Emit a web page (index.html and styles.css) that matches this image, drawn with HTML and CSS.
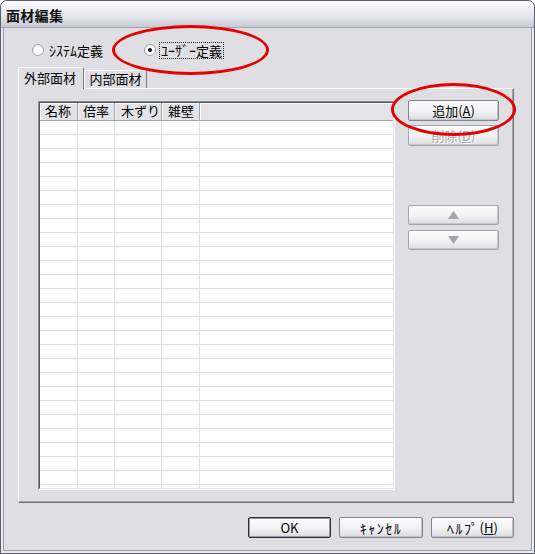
FILE: index.html
```html
<!DOCTYPE html>
<html lang="ja">
<head>
<meta charset="utf-8">
<title>面材編集</title>
<link rel="stylesheet" href="styles.css">
</head>
<body>
<div class="window">
  <div class="titlebar"><span class="title">面材編集</span></div>
  <div class="client">
    <div class="radios">
      <label class="radio r1"><span class="dot"></span><span class="rtext"><span class="hk">ｼｽﾃﾑ</span>定義</span></label>
      <label class="radio r2"><span class="dot checked"></span><span class="rtext focus"><span class="hk">ﾕｰｻﾞｰ</span>定義</span></label>
    </div>
    <div class="tabs">
      <div class="tab active">外部面材</div>
      <div class="tab">内部面材</div>
    </div>
    <div class="panel">
      <div class="list">
        <div class="list-inner">
          <div class="lv-head">
            <div class="hc c1">名称</div>
            <div class="hc c2">倍率</div>
            <div class="hc c3">木ずり</div>
            <div class="hc c4">雑壁</div>
            <div class="hc c5"></div>
          </div>
          <div class="lv-body">
            <div class="col c1"></div>
            <div class="col c2"></div>
            <div class="col c3"></div>
            <div class="col c4"></div>
            <div class="col c5"></div>
          </div>
        </div>
      </div>
      <div class="side">
        <button class="btn side-btn">追加(<u>A</u>)</button>
        <button class="btn side-btn disabled second">削除(<u>D</u>)</button>
        <button class="btn arrow disabled up"><svg width="11" height="8" viewBox="0 0 11 8"><polygon points="5.5,0 11,8 0,8" fill="#a4a4ac"/></svg></button>
        <button class="btn arrow disabled down"><svg width="11" height="8" viewBox="0 0 11 8"><polygon points="0,0 11,0 5.5,8" fill="#a4a4ac"/></svg></button>
      </div>
    </div>
    <div class="footer">
      <button class="btn foot default">OK</button>
      <button class="btn foot wide"><span class="hk bk">ｷｬﾝｾﾙ</span></button>
      <button class="btn foot"><span class="hk bk">ﾍﾙﾌﾟ</span>(<u>H</u>)</button>
    </div>
  </div>
  <div class="mark mark1"></div>
  <div class="mark mark2"></div>
</div>
</body>
</html>
```

FILE: styles.css
```css
* { box-sizing: border-box; }

html, body {
  margin: 0;
  padding: 0;
  background: #ffffff;
}

body {
  font-family: "Noto Sans CJK JP", sans-serif;
  font-size: 13px;
  color: #000;
}

.window {
  position: relative;
  width: 535px;
  height: 554px;
  border: 1px solid #5c5c6c;
  border-radius: 7px 7px 0 0;
  background: #dfdfe3;
  box-shadow: inset 0 0 0 2px #ececf0, inset 0 0 0 3px #9c9ca8;
  overflow: hidden;
  display: flex;
  flex-direction: column;
}

.titlebar {
  height: 27px;
  flex: none;
  display: flex;
  align-items: center;
  padding: 2px 0 0 5px;
  border-bottom: 1px solid #a6a6b2;
  border-radius: 6px 6px 0 0;
  background: linear-gradient(#fbfbfc 0%, #eeeef2 35%, #dedee6 70%, #c9c9d3 100%);
}

.title {
  font-size: 14px;
  font-weight: bold;
  line-height: 16px;
  letter-spacing: 0.3px;
  color: #111;
}

.client {
  flex: 1;
  display: flex;
  flex-direction: column;
  padding: 0 20px 0 17px;
}

/* half-width katakana, a little larger like the bitmap UI font */
.hk {
  font-size: 14px;
  line-height: 14px;
}

.bk { letter-spacing: 1.5px; }

/* radio row */
.radios {
  margin-top: 14px;
  height: 16px;
  display: flex;
  align-items: center;
  padding-left: 14px;
}

.radio {
  display: flex;
  align-items: center;
  line-height: 14px;
}

.r1 { width: 112px; gap: 5px; }
.r2 { gap: 3px; }

.dot {
  width: 12px;
  height: 12px;
  border-radius: 50%;
  border: 1px solid #a2a2ae;
  background: radial-gradient(circle at 60% 60%, #ffffff 0 45%, #e6e6ec 80%, #d6d6de 100%);
  position: relative;
  flex: none;
}

.dot.checked::after {
  content: "";
  position: absolute;
  left: 3px;
  top: 3px;
  width: 4px;
  height: 4px;
  border-radius: 50%;
  background: #111;
}

.rtext { white-space: nowrap; }

.focus {
  border: 1px dotted #222;
  padding: 0 1px;
  line-height: 14px;
}

/* tabs */
.tabs {
  margin-top: 9px;
  height: 22px;
  margin-bottom: -1px;
  display: flex;
  align-items: flex-end;
  position: relative;
  z-index: 1;
}

.tab {
  height: 18px;
  width: 63px;
  margin-bottom: 1px;
  border: 1px solid #ffffff;
  border-right-color: #7a7a84;
  border-bottom: none;
  border-radius: 2px 2px 0 0;
  background: #dfdfe3;
  line-height: 16px;
  text-align: center;
  white-space: nowrap;
}

.tab.active {
  height: 22px;
  width: 66px;
  margin-bottom: 0;
  line-height: 19px;
  text-align: left;
  padding-left: 5px;
}

/* panel */
.panel {
  height: 415px;
  flex: none;
  border: 1px solid;
  border-color: #ffffff #6e6e78 #6e6e78 #ffffff;
  box-shadow: inset -1px -1px 0 #a6a6b0;
  display: flex;
  align-items: flex-start;
  padding: 11px 0 0 19px;
}

.list {
  margin-top: 1px;
  width: 357px;
  height: 389px;
  border: 1px solid;
  border-color: #8c8c96 #ffffff #ffffff #8c8c96;
  flex: none;
}

.list-inner {
  height: 100%;
  border: 1px solid;
  border-color: #55555e #e6e6ea #e6e6ea #55555e;
  background: #ffffff;
  display: flex;
  flex-direction: column;
  overflow: hidden;
}

.lv-head {
  height: 18px;
  flex: none;
  display: flex;
  background: #e4e4e8;
  border-bottom: 1px solid #a4a4ac;
}

.hc {
  height: 17px;
  line-height: 16px;
  padding-left: 5px;
  border-right: 1px solid #a4a4ac;
  box-shadow: inset 1px 1px 0 #fbfbfc;
  white-space: nowrap;
}

.c1 { width: 38px; flex: none; }
.c2 { width: 37px; flex: none; }
.c3 { width: 47px; flex: none; padding-left: 6px; }
.c4 { width: 38px; flex: none; padding-left: 6px; }
.c5 { flex: 1; border-right: none; }

.lv-body {
  flex: 1;
  display: flex;
  background: repeating-linear-gradient(to bottom, #ffffff 0, #ffffff 13px, #e0e0e2 13px, #e0e0e2 14px);
}

.col {
  border-right: 1px solid #e2e2e4;
}

.col.c5 { border-right: none; }

/* side buttons */
.side {
  margin-left: 13px;
  width: 91px;
  display: flex;
  flex-direction: column;
}

.btn {
  font-family: "Noto Sans CJK JP", sans-serif;
  font-size: 13px;
  color: #000;
  margin: 0;
  padding: 0;
  height: 21px;
  line-height: 18px;
  border: 1px solid #84848e;
  border-radius: 2px;
  background: linear-gradient(#fdfdfe 0%, #f0f0f3 60%, #e1e1e6 90%, #d4d4da 100%);
  box-shadow: inset -1px -1px 0 #c4c4cc;
  display: flex;
  align-items: center;
  justify-content: center;
  white-space: nowrap;
}

.btn u { text-decoration: underline; }

.side-btn { width: 91px; }
.second { margin-top: 4px; }

.btn.disabled {
  color: #a6a6ae;
  text-shadow: 1px 1px 0 #ffffff;
  border-color: #a4a4ae;
}

.arrow {
  width: 91px;
  height: 20px;
}

.arrow.up { margin-top: 59px; }
.arrow.down { margin-top: 5px; }

/* footer */
.footer {
  margin-top: 14px;
  display: flex;
  justify-content: flex-end;
  gap: 8px;
}

.foot { width: 83px; }
.foot.wide { width: 84px; }

.btn.default {
  border-color: #2e2e38;
  box-shadow: inset 0 0 0 1px #9a9aa6;
}

/* red annotation ellipses */
.mark {
  position: absolute;
  border: 3px solid #e60000;
  border-radius: 50%;
  pointer-events: none;
  z-index: 5;
}

.mark1 {
  left: 111px;
  top: 24px;
  width: 157px;
  height: 50px;
}

.mark2 {
  left: 390px;
  top: 82px;
  width: 125px;
  height: 53px;
}
```
